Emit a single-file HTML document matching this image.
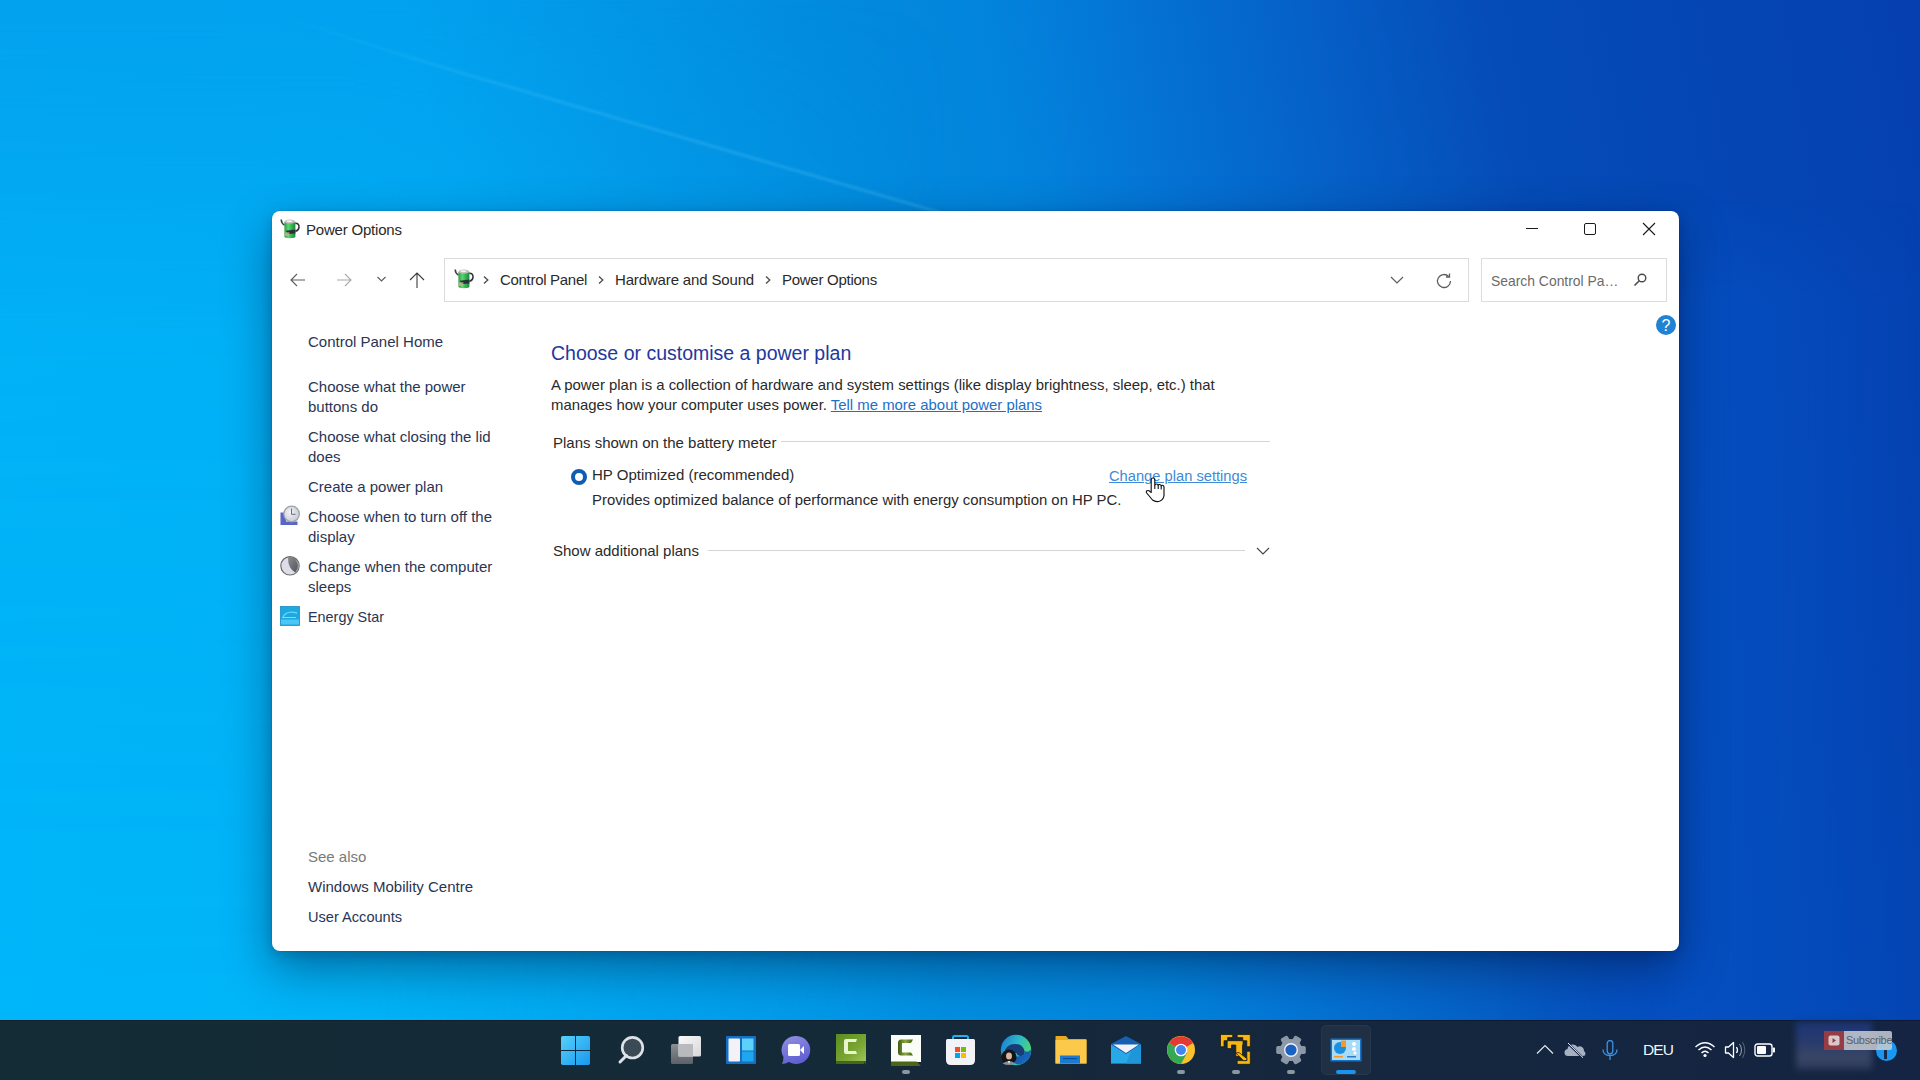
<!DOCTYPE html>
<html><head><meta charset="utf-8">
<style>
*{margin:0;padding:0;box-sizing:border-box}
html,body{width:1920px;height:1080px;overflow:hidden}
body{position:relative;font-family:"Liberation Sans",sans-serif;font-size:15px;color:#2a2a2a;
background:linear-gradient(80deg,#04a2ef 174px,#02a2f0 588px,#0398e8 765px,#028ddf 962px,#0284dc 1159px,#0476d6 1277px,#0562c8 1454px,#054cb8 1651px,#0446b4 1848px,#0640b0 2065px);}
#bg1{position:absolute;left:0;top:0;width:1920px;height:1020px;
background:linear-gradient(90deg,rgba(0,184,250,1) 0px,rgba(0,182,248,1) 350px,rgba(0,170,240,0.5) 650px,rgba(0,150,230,0) 950px);
-webkit-mask-image:linear-gradient(180deg,rgba(0,0,0,0) 0px,rgba(0,0,0,0.25) 150px,rgba(0,0,0,0.7) 350px,rgba(0,0,0,0.9) 1020px);}
#bg2{position:absolute;left:1500px;top:200px;width:420px;height:820px;
background:linear-gradient(90deg,rgba(5,80,196,0) 0px,rgba(5,80,196,0.8) 180px,rgba(5,80,196,0.5) 280px,rgba(5,80,196,0) 420px);
-webkit-mask-image:linear-gradient(180deg,rgba(0,0,0,0) 0px,rgba(0,0,0,1) 100px,rgba(0,0,0,1) 820px);}
.t{position:absolute;white-space:nowrap;line-height:20px;}
.nav{color:#2a3554}
.win{position:absolute;left:272px;top:211px;width:1407px;height:740px;background:#fff;border-radius:8px;
box-shadow:0 18px 48px rgba(0,10,40,0.42),0 4px 12px rgba(0,10,40,0.16),0 0 0 1px rgba(0,0,0,0.06);}
.addr{position:absolute;left:444px;top:258px;width:1025px;height:44px;border:1px solid #dcdcdc;background:#fff}
.search{position:absolute;left:1481px;top:258px;width:186px;height:44px;border:1px solid #dcdcdc;background:#fff}
.hr{position:absolute;height:1px;background:#d4d4d4}
.tb{position:absolute;left:0;top:1020px;width:1920px;height:60px;border-top:1px solid rgba(0,10,20,0.35);background:linear-gradient(90deg,#132c35 0%,#152a38 40%,#15273e 70%,#142442 100%)}
.ic{position:absolute}
</style></head><body>
<div id="bg1"></div><div id="bg2"></div>
<svg class="ic" style="left:0;top:0" width="1000" height="215" viewBox="0 0 1000 215">
 <defs><filter id="sb" x="-5%" y="-50%" width="110%" height="200%"><feGaussianBlur stdDeviation="1.2"/></filter>
 <linearGradient id="sg" gradientUnits="userSpaceOnUse" x1="270" y1="0" x2="945" y2="0"><stop offset="0" stop-color="#78d7ff" stop-opacity="0"/><stop offset="0.35" stop-color="#78d7ff" stop-opacity="0.16"/><stop offset="1" stop-color="#78d7ff" stop-opacity="0.22"/></linearGradient></defs>
 <path d="M270 12Q400 56 520 90Q700 143 945 214" stroke="url(#sg)" stroke-width="3" fill="none" filter="url(#sb)"/>
</svg>

<div class="win"></div>

<!-- title bar -->
<svg class="ic" style="left:280px;top:218px" width="20" height="21" viewBox="0 0 20 21">
 <defs><linearGradient id="bga" x1="0" y1="0" x2="1" y2="0"><stop offset="0" stop-color="#2f9a44"/><stop offset="0.35" stop-color="#5ad872"/><stop offset="0.7" stop-color="#2fae4c"/><stop offset="1" stop-color="#1f8a38"/></linearGradient></defs>
 <path d="M1.2 1.5Q1.4 5.5 4.6 7.2" stroke="#3a3a44" stroke-width="1.5" fill="none"/>
 <path d="M4.4 4H15.4V18.5Q15.4 20.2 10 20.2Q4.4 20.2 4.4 18.5Z" fill="url(#bga)"/>
 <ellipse cx="9.9" cy="3.6" rx="5.5" ry="2" fill="#bdbdbd"/><ellipse cx="9.4" cy="3.2" rx="3" ry="1" fill="#f2f2f2"/>
 <path d="M15.4 5.3Q19.3 5.3 19 9.3Q18.6 12.4 15.4 13.4" stroke="#2e2e34" stroke-width="1.5" fill="none"/>
 <path d="M5.8 12.8L15.4 11.4V15.6L8 16Z" fill="#28303e"/>
 <path d="M4.4 14.5L9.5 14.2L9 18L4.4 18Z" fill="#c4b088" opacity="0.85"/>
</svg>
<div class="t" style="left:306px;top:220px;font-size:15px;letter-spacing:-0.2px;color:#2a2a2a">Power Options</div>
<!-- caption buttons -->
<div class="ic" style="left:1526px;top:228px;width:12px;height:1px;background:#1a1a1a"></div>
<div class="ic" style="left:1584px;top:223px;width:12px;height:12px;border:1px solid #1a1a1a;border-radius:2px"></div>
<svg class="ic" style="left:1642px;top:222px" width="14" height="14" viewBox="0 0 14 14"><path d="M1 1L13 13M13 1L1 13" stroke="#1a1a1a" stroke-width="1.1"/></svg>

<!-- nav buttons -->
<svg class="ic" style="left:289px;top:272px" width="18" height="16" viewBox="0 0 18 16"><path d="M16 8H2.5M8 2L2 8L8 14" stroke="#5c5c5c" stroke-width="1.1" fill="none"/></svg>
<svg class="ic" style="left:335px;top:272px" width="18" height="16" viewBox="0 0 18 16"><path d="M2 8H15.5M10 2L16 8L10 14" stroke="#a8a8a8" stroke-width="1.1" fill="none"/></svg>
<svg class="ic" style="left:376px;top:275px" width="11" height="8" viewBox="0 0 11 8"><path d="M1.5 2L5.5 6L9.5 2" stroke="#5c5c5c" stroke-width="1.1" fill="none"/></svg>
<svg class="ic" style="left:408px;top:271px" width="18" height="18" viewBox="0 0 18 18"><path d="M9 17V2M2 9L9 2L16 9" stroke="#3c3c3c" stroke-width="1.1" fill="none"/></svg>

<div class="addr"></div>
<svg class="ic" style="left:454px;top:268px" width="20" height="21" viewBox="0 0 20 21">
 <defs><linearGradient id="bgb" x1="0" y1="0" x2="1" y2="0"><stop offset="0" stop-color="#2f9a44"/><stop offset="0.35" stop-color="#5ad872"/><stop offset="0.7" stop-color="#2fae4c"/><stop offset="1" stop-color="#1f8a38"/></linearGradient></defs>
 <path d="M1.2 1.5Q1.4 5.5 4.6 7.2" stroke="#3a3a44" stroke-width="1.5" fill="none"/>
 <path d="M4.4 4H15.4V18.5Q15.4 20.2 10 20.2Q4.4 20.2 4.4 18.5Z" fill="url(#bgb)"/>
 <ellipse cx="9.9" cy="3.6" rx="5.5" ry="2" fill="#bdbdbd"/><ellipse cx="9.4" cy="3.2" rx="3" ry="1" fill="#f2f2f2"/>
 <path d="M15.4 5.3Q19.3 5.3 19 9.3Q18.6 12.4 15.4 13.4" stroke="#2e2e34" stroke-width="1.5" fill="none"/>
 <path d="M5.8 12.8L15.4 11.4V15.6L8 16Z" fill="#28303e"/>
 <path d="M4.4 14.5L9.5 14.2L9 18L4.4 18Z" fill="#c4b088" opacity="0.85"/>
</svg>
<svg class="ic" style="left:482px;top:275px" width="8" height="10" viewBox="0 0 8 10"><path d="M2 1.5L5.8 5L2 8.5" stroke="#4a4a4a" stroke-width="1.3" fill="none"/></svg>
<div class="t" style="left:500px;top:270px;font-size:15px;letter-spacing:-0.3px;color:#2a2a2a">Control Panel</div>
<svg class="ic" style="left:597px;top:275px" width="8" height="10" viewBox="0 0 8 10"><path d="M2 1.5L5.8 5L2 8.5" stroke="#4a4a4a" stroke-width="1.3" fill="none"/></svg>
<div class="t" style="left:615px;top:270px;font-size:15px;letter-spacing:-0.15px;color:#2a2a2a">Hardware and Sound</div>
<svg class="ic" style="left:764px;top:275px" width="8" height="10" viewBox="0 0 8 10"><path d="M2 1.5L5.8 5L2 8.5" stroke="#4a4a4a" stroke-width="1.3" fill="none"/></svg>
<div class="t" style="left:782px;top:270px;font-size:15px;letter-spacing:-0.27px;color:#2a2a2a">Power Options</div>
<svg class="ic" style="left:1389px;top:274px" width="16" height="12" viewBox="0 0 16 12"><path d="M2 3L8 9L14 3" stroke="#5c5c5c" stroke-width="1.2" fill="none"/></svg>
<svg class="ic" style="left:1434px;top:271px" width="20" height="20" viewBox="0 0 20 20"><path d="M16.5 10A6.5 6.5 0 1 1 14.6 5.4" stroke="#5c5c5c" stroke-width="1.3" fill="none"/><path d="M15.5 2.5V6H12" stroke="#5c5c5c" stroke-width="1.3" fill="none"/></svg>

<div class="search"></div>
<div class="t" style="left:1491px;top:271px;font-size:13.9px;color:#6b6b6b">Search Control Pa…</div>
<svg class="ic" style="left:1632px;top:272px" width="16" height="16" viewBox="0 0 16 16"><circle cx="10" cy="6" r="3.8" stroke="#4a4a4a" stroke-width="1.4" fill="none"/><path d="M7.3 8.7L2.5 13.5" stroke="#4a4a4a" stroke-width="1.6"/></svg>

<!-- help -->
<div class="ic" style="left:1656px;top:315px;width:20px;height:20px;border-radius:50%;background:#1f82d2;color:#fff;font-size:16px;line-height:21px;text-align:center;font-weight:normal">?</div>

<!-- left nav -->
<div class="t nav" style="left:308px;top:332px">Control Panel Home</div>
<div class="t nav" style="left:308px;top:377px">Choose what the power<br>buttons do</div>
<div class="t nav" style="left:308px;top:427px">Choose what closing the lid<br>does</div>
<div class="t nav" style="left:308px;top:477px">Create a power plan</div>
<div class="t nav" style="left:308px;top:507px">Choose when to turn off the<br>display</div>
<div class="t nav" style="left:308px;top:557px">Change when the computer<br>sleeps</div>
<div class="t nav" style="left:308px;top:607px;font-size:14.4px">Energy Star</div>
<div class="t" style="left:308px;top:847px;color:#7a7a7a">See also</div>
<div class="t nav" style="left:308px;top:877px">Windows Mobility Centre</div>
<div class="t nav" style="left:308px;top:907px;font-size:14.6px">User Accounts</div>

<!-- left icons -->
<svg class="ic" style="left:280px;top:505px" width="20" height="21" viewBox="0 0 20 21">
 <defs><radialGradient id="cf" cx="40%" cy="40%" r="65%"><stop offset="0" stop-color="#f2f4f8"/><stop offset="1" stop-color="#c4c8d0"/></radialGradient></defs>
 <path d="M0.5 7.5H6V16.5H17.5V20H0.5Z" fill="#5866c8"/>
 <circle cx="11.6" cy="9" r="7.8" fill="url(#cf)" stroke="#9ea2aa" stroke-width="1.2"/>
 <path d="M11.5 3.5V9.3H15.5" stroke="#6a6e76" stroke-width="1" fill="none"/>
</svg>
<svg class="ic" style="left:280px;top:556px" width="20" height="20" viewBox="0 0 20 20">
 <defs><linearGradient id="md" x1="0" y1="0" x2="1" y2="1"><stop offset="0" stop-color="#8a8c90"/><stop offset="1" stop-color="#505258"/></linearGradient></defs>
 <circle cx="10" cy="9.8" r="9.2" fill="#dcdde9" stroke="#6a6a6e" stroke-width="1.2"/>
 <path d="M8 1.2Q7.8 12.5 15.2 16.4A8.6 8.6 0 0 0 8 1.2Z" fill="url(#md)"/>
 <path d="M16.2 4.5A8.6 8.6 0 0 1 16.5 15" stroke="#a8acb8" stroke-width="0.9" fill="none"/>
</svg>
<svg class="ic" style="left:280px;top:606px" width="20" height="20" viewBox="0 0 20 20">
 <rect x="0.5" y="0.5" width="19" height="19" fill="#1ea8e0"/>
 <rect x="0.5" y="13.5" width="19" height="5" fill="#4cc6f2"/>
 <path d="M2.5 12Q6 4 17 7" stroke="#6ad6fa" stroke-width="1.3" fill="none"/>
 <path d="M3 11.5H16" stroke="#8ae0ff" stroke-width="0.9"/>
 <rect x="0.5" y="0.5" width="19" height="19" fill="none" stroke="#1a90c8" stroke-width="0.8"/>
</svg>

<!-- main -->
<div class="t" style="left:551px;top:340px;font-size:19.5px;line-height:26px;color:#23379e">Choose or customise a power plan</div>
<div class="t" style="left:551px;top:375px;font-size:14.92px;color:#2a2a2a">A power plan is a collection of hardware and system settings (like display brightness, sleep, etc.) that<br>manages how your computer uses power. <span style="color:#1d6fc8;text-decoration:underline">Tell me more about power plans</span></div>
<div class="t" style="left:553px;top:433px;color:#2a2a2a">Plans shown on the battery meter</div>
<div class="hr" style="left:781px;top:441px;width:489px"></div>
<div class="ic" style="left:571px;top:469px;width:16px;height:16px;border-radius:50%;background:#fff;border:4.5px solid #0f5cb4"></div>
<div class="t" style="left:592px;top:465px;color:#2a2a2a">HP Optimized (recommended)</div>
<div class="t" style="left:1109px;top:466px;font-size:14.7px;color:#3f8ad6;text-decoration:underline">Change plan settings</div>
<div class="t" style="left:592px;top:490px;font-size:14.9px;color:#2a2a2a">Provides optimized balance of performance with energy consumption on HP PC.</div>
<div class="t" style="left:553px;top:541px;color:#2a2a2a">Show additional plans</div>
<div class="hr" style="left:708px;top:550px;width:537px"></div>
<svg class="ic" style="left:1255px;top:545px" width="16" height="12" viewBox="0 0 16 12"><path d="M2 3L8 9L14 3" stroke="#444" stroke-width="1.1" fill="none"/></svg>

<!-- cursor -->
<svg class="ic" style="left:1138px;top:472px" width="34" height="34" viewBox="0 0 34 34">
 <path d="M13.2 20.5V8Q13.2 6 15 6Q16.8 6 16.8 8V13.5Q17 12 18.5 12Q20.2 12 20.2 13.5Q20.5 12.3 21.8 12.5Q23.2 12.8 23.2 14Q23.6 13.2 24.6 13.3Q26 13.6 26 15V23.5Q25.5 27.5 22 29Q18 30.5 14.5 28L8.7 21Q7.8 19.5 9 18.8Q10.5 18 12 19.5Z" fill="#fff" stroke="#111" stroke-width="1.15" stroke-linejoin="round"/>
 <path d="M16.8 13.5V17M20.2 13.5V17M23.2 14V17.5" stroke="#111" stroke-width="1.1"/>
</svg>

<!-- taskbar -->
<div class="tb"></div>
<!-- start -->
<svg class="ic" style="left:561px;top:1036px" width="29" height="29" viewBox="0 0 29 29">
 <defs><linearGradient id="wg" x1="0" y1="0" x2="1" y2="1"><stop offset="0" stop-color="#56d0fb"/><stop offset="1" stop-color="#1898ef"/></linearGradient></defs>
 <rect x="0" y="0" width="29" height="29" rx="1.8" fill="url(#wg)"/>
 <rect x="14" y="0" width="1" height="29" fill="#12283a"/><rect x="0" y="14" width="29" height="1" fill="#12283a"/>
</svg>
<!-- search -->
<svg class="ic" style="left:617px;top:1034px" width="30" height="32" viewBox="0 0 30 32">
 <circle cx="15.5" cy="13.7" r="10.3" fill="#3b4a55" stroke="#dde2e8" stroke-width="2.6"/>
 <path d="M9.5 21.5L3 28" stroke="#dde2e8" stroke-width="3" stroke-linecap="round"/>
</svg>
<!-- task view -->
<svg class="ic" style="left:670px;top:1035px" width="32" height="30" viewBox="0 0 32 30">
 <defs><linearGradient id="tvb" x1="0" y1="0" x2="0" y2="1"><stop offset="0" stop-color="#8a8f95"/><stop offset="1" stop-color="#5c6168"/></linearGradient>
 <linearGradient id="tvf" x1="0" y1="0" x2="1" y2="1"><stop offset="0" stop-color="#fafafa"/><stop offset="1" stop-color="#d8d8dc"/></linearGradient></defs>
 <rect x="1" y="9" width="22" height="20" rx="1.5" fill="url(#tvb)"/>
 <rect x="8.5" y="1" width="22.5" height="20.5" rx="1.5" fill="url(#tvf)"/>
 <rect x="8.5" y="9" width="14.5" height="12.5" fill="#b8babe"/>
</svg>
<!-- widgets -->
<svg class="ic" style="left:726px;top:1036px" width="30" height="28" viewBox="0 0 30 28">
 <rect x="0" y="0" width="30" height="28" rx="1" fill="#1570c4"/>
 <rect x="2.5" y="2.5" width="11.5" height="23" rx="1" fill="#f4f2f6"/>
 <rect x="16" y="2.5" width="11.5" height="12" fill="#5cd2f8"/>
 <rect x="16" y="15.5" width="11.5" height="10" fill="#1ea6ef"/>
</svg>
<!-- teams chat -->
<svg class="ic" style="left:781px;top:1035px" width="30" height="30" viewBox="0 0 30 30">
 <defs><linearGradient id="tm" x1="0.3" y1="0" x2="0.7" y2="1"><stop offset="0" stop-color="#8d8ce2"/><stop offset="1" stop-color="#5b5bd0"/></linearGradient></defs>
 <path d="M15.5 1A14 14 0 1 1 8 27Q4 29 1 29Q2.5 26 2.5 22A14 14 0 0 1 15.5 1Z" fill="url(#tm)"/>
 <rect x="7" y="9" width="12" height="12" rx="1.5" fill="#fff"/>
 <path d="M19 15L23 11V19Z" fill="#fff"/>
</svg>
<!-- camtasia green -->
<svg class="ic" style="left:836px;top:1034px" width="31" height="31" viewBox="0 0 31 31">
 <defs><linearGradient id="cg" x1="0" y1="0" x2="1" y2="1"><stop offset="0" stop-color="#5a8a22"/><stop offset="0.6" stop-color="#7aa632"/><stop offset="1" stop-color="#9ec45a"/></linearGradient></defs>
 <rect x="0" y="0" width="30" height="27" fill="url(#cg)"/>
 <path d="M0 27H30L30 31L27 27Z" fill="#3e5e14"/><rect x="0" y="27" width="28" height="3" fill="#46661a"/>
 <path d="M21 5H10Q8 5 8 7V18Q8 20 10 20H21L20 17H12V8H20Z" fill="#e8f4d0"/>
</svg>
<!-- camtasia white -->
<svg class="ic" style="left:891px;top:1035px" width="31" height="31" viewBox="0 0 31 31">
 <defs><linearGradient id="cw" x1="0" y1="0" x2="1" y2="0"><stop offset="0" stop-color="#3e5a12"/><stop offset="0.5" stop-color="#8aa83c"/><stop offset="1" stop-color="#3e5a12"/></linearGradient></defs>
 <rect x="0" y="0" width="30" height="27" fill="#fbfdf8"/>
 <path d="M0 26.5H25.5L30 31H0Z" fill="#4a6616"/>
 <path d="M22 4.5H10Q7 4.5 7 8V17Q7 20.5 10 20.5H22L20 17.5H11V8H20Z" fill="url(#cw)"/>
</svg>
<div class="ic" style="left:902px;top:1070px;width:8px;height:4px;border-radius:2px;background:#8c969e"></div>
<!-- store -->
<svg class="ic" style="left:945px;top:1035px" width="31" height="31" viewBox="0 0 31 31">
 <path d="M8 9V2.5Q8 1 9.5 1H21.5Q23 1 23 2.5V9" stroke="#25b0ec" stroke-width="2" fill="none"/>
 <path d="M1 5.5Q1 4 2.5 4H28.5Q30 4 30 5.5V25Q30 30 25 30H6Q1 30 1 25Z" fill="#f2f3f6"/>
 <rect x="10" y="12" width="5" height="5" fill="#f25022"/><rect x="16" y="12" width="5" height="5" fill="#7fba00"/>
 <rect x="10" y="18" width="5" height="5" fill="#00a4ef"/><rect x="16" y="18" width="5" height="5" fill="#ffb900"/>
</svg>
<!-- edge -->
<svg class="ic" style="left:1000px;top:1034px" width="32" height="32" viewBox="0 0 32 32">
 <defs><linearGradient id="eg" x1="0" y1="0.2" x2="1" y2="0.6"><stop offset="0" stop-color="#1b7fd4"/><stop offset="0.5" stop-color="#2cb8c8"/><stop offset="1" stop-color="#52d86a"/></linearGradient>
 <linearGradient id="eb" x1="0" y1="0" x2="1" y2="1"><stop offset="0" stop-color="#0f4a9a"/><stop offset="1" stop-color="#1d72cc"/></linearGradient></defs>
 <circle cx="16" cy="16" r="15.2" fill="url(#eg)"/>
 <path d="M4 19Q6 10 15 10Q23 10 24.5 17Q25 22 21 22Q17 22 16.5 19Z" fill="#173c78"/>
 <path d="M24.5 17Q25 22 21 22Q15 22 13 26Q14 31 20 30.5Q28 29 30.5 21Q31 18 30.8 15.5Q28 19 24.5 17Z" fill="url(#eb)"/>
 <circle cx="9" cy="23" r="7.6" fill="#121418"/>
 <ellipse cx="9" cy="22" rx="3" ry="3.6" fill="#d9b49c"/>
 <path d="M2.5 29.5Q9 24.5 15.5 29.5Q12 31 9 31Q5.5 31 2.5 29.5Z" fill="#8a8e96"/>
 <path d="M8 27L9 30L10 27Z" fill="#fff"/>
</svg>
<!-- explorer -->
<svg class="ic" style="left:1055px;top:1035px" width="32" height="30" viewBox="0 0 32 30">
 <path d="M0.5 1.5Q0.5 1 1 1H11L13.5 4H31Q31.5 4 31.5 5V28.5H0.5Z" fill="#e8a820"/>
 <rect x="0.5" y="5" width="31" height="23.5" fill="#fcc94a"/>
 <rect x="5" y="20.5" width="20" height="8" fill="#1a7ad4"/>
 <rect x="8" y="23" width="14" height="1.2" fill="#0d4f94"/>
</svg>
<!-- mail -->
<svg class="ic" style="left:1110px;top:1035px" width="32" height="30" viewBox="0 0 32 30">
 <path d="M1 9L16 1L31 9V28.5H1Z" fill="#1660b2"/>
 <path d="M3 9.5H29L16 18Z" fill="#f4f2f6"/>
 <path d="M1 9.5L16 19L31 9.5V28.5H1Z" fill="#28a8e6"/>
 <path d="M31 9.5V28.5H16L22 15Z" fill="#1e96da"/>
</svg>
<!-- chrome -->
<svg class="ic" style="left:1166px;top:1035px" width="30" height="30" viewBox="0 0 30 30">
 <circle cx="15" cy="15" r="14" fill="#fbc02d"/>
 <path d="M15 15L3 8A14 14 0 0 1 27.1 8Z" fill="#e53935"/>
 <path d="M15 15L3 8A14 14 0 0 0 15 29L21 18Z" fill="#34a853"/>
 <circle cx="15" cy="15" r="6.3" fill="#fff"/><circle cx="15" cy="15" r="5" fill="#4285f4"/>
</svg>
<div class="ic" style="left:1177px;top:1070px;width:8px;height:4px;border-radius:2px;background:#8c969e"></div>
<!-- vmware -->
<svg class="ic" style="left:1220px;top:1034px" width="32" height="32" viewBox="0 0 32 32">
 <g fill="#f8b514" stroke="#0e1208" stroke-width="0.7">
 <path d="M0.5 0.5H12.7V3.6H7.6V6.7H4V12.7H0.5Z"/>
 <path d="M17.2 0.5H30.3V12.7H26.8V6.7H22.8V3.6H17.2Z"/>
 <path d="M30.3 17.3V30.3H17.2V26.6H26.8V17.3Z"/>
 <path d="M7.2 6.7H23V11H22.5V22.5H15.8V11H11.5V14.6H7.2Z"/>
 <path d="M15.8 19L19 18.5L26.8 24.5L26.8 26.6L23.5 26.6Z"/>
 </g>
</svg>
<div class="ic" style="left:1232px;top:1070px;width:8px;height:4px;border-radius:2px;background:#8c969e"></div>
<!-- settings -->
<svg class="ic" style="left:1275px;top:1034px" width="32" height="32" viewBox="0 0 32 32">
 <rect x="12" y="1.2" width="8" height="8" rx="1.8" fill="#8c97a6" transform="rotate(30 16 16)"/><rect x="12" y="1.2" width="8" height="8" rx="1.8" fill="#8c97a6" transform="rotate(90 16 16)"/><rect x="12" y="1.2" width="8" height="8" rx="1.8" fill="#8c97a6" transform="rotate(150 16 16)"/><rect x="12" y="1.2" width="8" height="8" rx="1.8" fill="#8c97a6" transform="rotate(210 16 16)"/><rect x="12" y="1.2" width="8" height="8" rx="1.8" fill="#8c97a6" transform="rotate(270 16 16)"/><rect x="12" y="1.2" width="8" height="8" rx="1.8" fill="#8c97a6" transform="rotate(330 16 16)"/>
 <circle cx="16" cy="16" r="11" fill="#8e99a8"/>
 <circle cx="16" cy="16" r="7" fill="#eef3fa"/><circle cx="16" cy="16" r="5.6" fill="#1b62c0"/>
</svg>
<div class="ic" style="left:1287px;top:1070px;width:8px;height:4px;border-radius:2px;background:#8c969e"></div>
<!-- active control panel -->
<div class="ic" style="left:1321px;top:1025px;width:50px;height:50px;border-radius:5px;background:#1f3045;box-shadow:inset 0 0 0 1px rgba(255,255,255,0.04)"></div>
<svg class="ic" style="left:1330px;top:1038px" width="32" height="24" viewBox="0 0 32 24">
 <rect x="0.5" y="0.5" width="31" height="23" fill="#1872c8"/>
 <rect x="2" y="2" width="28" height="20" fill="#a8dcf6"/>
 <circle cx="10" cy="10" r="6" fill="#1e8ee0"/>
 <path d="M11 2.5H16V9H11Z" fill="#f49a2a"/>
 <rect x="4" y="18" width="9" height="1.5" fill="#f49a2a"/><rect x="17" y="18" width="9" height="1.5" fill="#2a7cc8"/>
 <circle cx="24" cy="6" r="2" fill="#fff"/><circle cx="24" cy="11" r="2" fill="#fff"/><circle cx="25" cy="15" r="1.5" fill="#fff"/>
</svg>
<div class="ic" style="left:1336px;top:1070px;width:20px;height:4px;border-radius:2px;background:#1a92f0"></div>
<!-- tray -->
<svg class="ic" style="left:1536px;top:1044px" width="18" height="11" viewBox="0 0 18 11"><path d="M1 9.5L9 1.5L17 9.5" stroke="#e2e8f0" stroke-width="1.2" fill="none"/></svg>
<svg class="ic" style="left:1564px;top:1042px" width="22" height="17" viewBox="0 0 22 17">
 <path d="M4 14Q0.5 14 0.5 10.5Q0.5 7.5 3.5 7Q4 2.5 9 2.5Q12 2.5 13.5 5Q15 4 17 4.5Q20 5.5 20 9Q21.5 10 21.5 12Q21.5 14 19 14Z" fill="#a7b1c2"/>
 <path d="M4 1.5L18.5 15.5" stroke="#152444" stroke-width="2.2"/><path d="M4 1L19 15.7" stroke="#e6ebf2" stroke-width="1"/>
</svg>
<svg class="ic" style="left:1602px;top:1040px" width="16" height="21" viewBox="0 0 16 21"><rect x="5.2" y="0.6" width="5.6" height="13.2" rx="2.8" stroke="#3a92e6" stroke-width="1.3" fill="none"/><path d="M1 9.5Q1 15.5 8 15.5Q15 15.5 15 9.5M8 15.5V20" stroke="#3a92e6" stroke-width="1.3" fill="none"/></svg>
<div class="t" style="left:1643px;top:1040px;font-size:15.5px;color:#f2f4f8;letter-spacing:-0.9px">DEU</div>
<svg class="ic" style="left:1694px;top:1041px" width="22" height="17" viewBox="0 0 22 17">
 <path d="M1.5 6Q11 -2.5 20.5 6" stroke="#fff" stroke-width="1.4" fill="none"/>
 <path d="M4.5 9Q11 3 17.5 9" stroke="#fff" stroke-width="1.4" fill="none"/>
 <path d="M7.5 12Q11 8.5 14.5 12" stroke="#fff" stroke-width="1.4" fill="none"/>
 <circle cx="11" cy="14.5" r="1.6" fill="#fff"/>
</svg>
<svg class="ic" style="left:1724px;top:1041px" width="22" height="18" viewBox="0 0 22 18">
 <path d="M1.5 6H4.5L9.5 1.5V16.5L4.5 12H1.5Z" stroke="#fff" stroke-width="1.3" fill="none" stroke-linejoin="round"/>
 <path d="M12.5 6Q14.5 9 12.5 12" stroke="#fff" stroke-width="1.3" fill="none"/>
 <path d="M15.5 3Q19.5 9 15.5 15" stroke="#9aa4b4" stroke-width="1" fill="none"/>
 <path d="M18.5 1Q23 9 18.5 17" stroke="#6a7488" stroke-width="0.8" fill="none"/>
</svg>
<svg class="ic" style="left:1754px;top:1043px" width="22" height="14" viewBox="0 0 22 14">
 <rect x="1" y="1" width="17" height="12" rx="2.5" stroke="#fff" stroke-width="1.4" fill="none"/>
 <rect x="3" y="3" width="9" height="8" rx="1" fill="#fff"/>
 <rect x="18.8" y="4.5" width="2.2" height="5" rx="0.8" fill="#fff"/>
</svg>
<div class="ic" style="left:1796px;top:1022px;width:76px;height:48px;background:linear-gradient(180deg,#1c3578 0%,#2a3c6a 45%,#3a4766 75%,#2a3656 100%);filter:blur(3px)"></div>
<div class="ic" style="left:1824px;top:1031px;width:20px;height:19px;background:#963c44"></div>
<svg class="ic" style="left:1828px;top:1035px" width="12" height="11" viewBox="0 0 12 11"><rect x="0.5" y="0.5" width="11" height="10" rx="2" fill="#d8c8cc"/><path d="M4.5 3L8 5.5L4.5 8Z" fill="#963c44"/></svg>
<div class="ic" style="left:1886px;top:1040px;width:21px;height:21px;margin-left:-10px;border-radius:50%;background:#1898f0"></div>
<div class="ic" style="left:1844px;top:1031px;width:48px;height:19px;background:rgba(200,204,212,0.85);border-radius:0 2px 2px 0"></div>
<div class="t" style="left:1846px;top:1030px;font-size:11px;color:#5a5e66;letter-spacing:-0.3px">Subscribe</div>
<div class="ic" style="left:1884px;top:1050px;width:3px;height:9px;background:#1a2a4a"></div>

</body></html>
